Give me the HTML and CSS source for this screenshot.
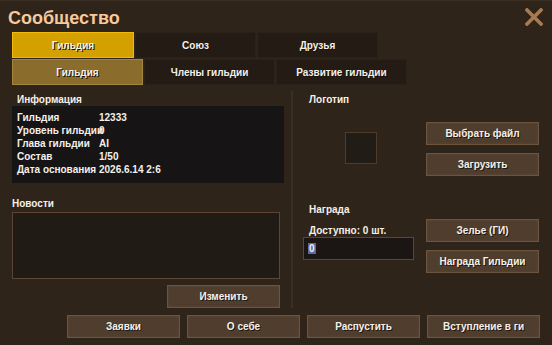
FILE: index.html
```html
<!DOCTYPE html>
<html lang="ru">
<head>
  <meta charset="UTF-8">
  <meta name="viewport" content="width=device-width, initial-scale=1.0">
  <title>Сообщество</title>
  <link rel="stylesheet" href="styles.css">
</head>
<body>
  <div id="okno">
    <div class="shapka">
      <h1 class="zagolovok">Сообщество</h1>
      <button class="zakryt" aria-label="Закрыть">
        <svg width="18" height="18" viewBox="0 0 18 18">
          <path d="M2 2 L16 16 M16 2 L2 16" stroke="#a87a52" stroke-width="3.6" stroke-linecap="square"/>
        </svg>
      </button>
    </div>

    <div class="vkladki">
      <div class="vkladka aktivna">Гильдия</div>
      <div class="vkladka">Союз</div>
      <div class="vkladka">Друзья</div>
    </div>
    <div class="vkladki vtoroy">
      <div class="vkladka aktivna2">Гильдия</div>
      <div class="vkladka">Члены гильдии</div>
      <div class="vkladka">Развитие гильдии</div>
    </div>

    <div class="osnova">
      <div class="levo">
        <p class="metka info-metka">Информация</p>
        <div class="info">
          <span class="k">Гильдия</span><span class="z">12333</span>
          <span class="k">Уровень гильдии</span><span class="z">0</span>
          <span class="k">Глава гильдии</span><span class="z">AI</span>
          <span class="k">Состав</span><span class="z">1/50</span>
          <span class="k">Дата основания</span><span class="z">2026.6.14 2:6</span>
        </div>
        <p class="metka novosti-metka">Новости</p>
        <div class="novosti"></div>
        <button class="knopka izmenit">Изменить</button>
      </div>

      <div class="razdel"></div>

      <div class="pravo">
        <div class="sekciya">
          <div class="sek-levo">
            <p class="metka">Логотип</p>
            <div class="logotip"></div>
          </div>
          <div class="sek-pravo logo-knopki">
            <button class="knopka">Выбрать файл</button>
            <button class="knopka">Загрузить</button>
          </div>
        </div>
        <div class="sekciya">
          <div class="sek-levo">
            <p class="metka nagrada-metka">Награда</p>
            <p class="metka dostupno">Доступно: 0 шт.</p>
            <div class="pole"><span class="vydel">0</span></div>
          </div>
          <div class="sek-pravo nagrada-knopki">
            <button class="knopka">Зелье (ГИ)</button>
            <button class="knopka">Награда Гильдии</button>
          </div>
        </div>
      </div>
    </div>

    <div class="niz">
      <button class="knopka">Заявки</button>
      <button class="knopka">О себе</button>
      <button class="knopka">Распустить</button>
      <button class="knopka">Вступление в ги</button>
    </div>
  </div>
</body>
</html>
```

FILE: styles.css
```css
* {
  margin: 0;
  padding: 0;
  box-sizing: border-box;
}

body {
  background-color: #2e2419;
  font-family: "Liberation Sans", Arial, sans-serif;
  font-weight: bold;
  font-size: 10px;
  color: #f4f0ea;
}

#okno {
  width: 552px;
  height: 345px;
  background-color: #2e2419;
  border-top: 1px solid #3b2f23;
}

.shapka {
  height: 31px;
  display: flex;
  align-items: center;
  justify-content: space-between;
  padding: 0 8px 0 8px;
}

.zagolovok {
  font-size: 18px;
  color: #f7c99c;
  line-height: 20px;
  padding-top: 3px;
}

.zakryt {
  background: none;
  border: none;
  width: 18px;
  height: 18px;
  margin-right: 1px;
  margin-top: 1px;
}

.vkladki {
  display: flex;
  gap: 1px;
  margin-left: 12px;
  height: 26px;
}

.vtoroy {
  margin-top: 1px;
}

.vkladka {
  width: 121px;
  background-color: #231b14;
  border: 1px solid #2a2119;
  display: flex;
  align-items: center;
  justify-content: center;
  text-shadow: 1px 1px 0 #1a120c;
}

.vtoroy .vkladka {
  width: 131px;
}

.aktivna {
  width: 122px;
  background-color: #d4a000;
  border-color: #f2b900;
}

.aktivna2 {
  background-color: #8a6c2c;
  border-color: #a5853b;
}

.osnova {
  display: flex;
  height: 224px;
  margin-left: 12px;
}

.levo {
  width: 272px;
  display: flex;
  flex-direction: column;
}

.metka {
  line-height: 13px;
}

.info-metka {
  margin-top: 8px;
  padding-left: 5px;
}

.info {
  height: 77px;
  background-color: #161414;
  padding: 5px 0 0 5px;
  display: grid;
  grid-template-columns: 82px auto;
  grid-auto-rows: 13px;
  line-height: 13px;
}

.info .k {
  white-space: nowrap;
}

.novosti-metka {
  margin-top: 14px;
}

.novosti {
  margin-top: 2px;
  width: 268px;
  height: 67px;
  background-color: #211b16;
  border: 1px solid #5c4532;
}

.knopka {
  width: 113px;
  height: 23px;
  font-family: inherit;
  font-weight: bold;
  font-size: 10px;
  color: #f4f0ea;
  background-color: #4f3d2d;
  border: 1px solid #6c543e;
  box-shadow: inset 0 0 3px #5e4936;
  text-shadow: 1px 1px 0 #22180f;
}

.izmenit {
  margin-top: 6px;
  margin-left: 155px;
}

.razdel {
  width: 2px;
  height: 217px;
  margin: 6px 0 0 7px;
  background-color: #3a2f23;
}

.pravo {
  width: 247px;
}

.sekciya {
  display: flex;
}

.sek-levo {
  width: 133px;
}

.sek-levo .metka {
  padding-left: 16px;
}

.sek-levo > .metka:first-child {
  margin-top: 8px;
}

.sek-pravo {
  display: flex;
  flex-direction: column;
  gap: 8px;
}

.logotip {
  width: 32px;
  height: 32px;
  margin: 26px 0 0 52px;
  background-color: #221c17;
  border: 1px solid #4e3b2a;
}

.logo-knopki {
  padding-top: 37px;
}

.sek-levo > .nagrada-metka:first-child {
  margin-top: 27px;
}

.dostupno {
  margin-top: 8px;
}

.pole {
  width: 111px;
  height: 23px;
  margin-left: 10px;
  background-color: #1b1613;
  border: 1px solid #5a4636;
  padding: 4px 0 0 4px;
  line-height: 13px;
}

.vydel {
  background-color: #5a6aa6;
  padding: 0 1px;
}

.nagrada-knopki {
  padding-top: 43px;
}

.niz {
  display: flex;
  justify-content: flex-end;
  gap: 7px;
  margin-top: 6px;
  padding-right: 12px;
}
```
